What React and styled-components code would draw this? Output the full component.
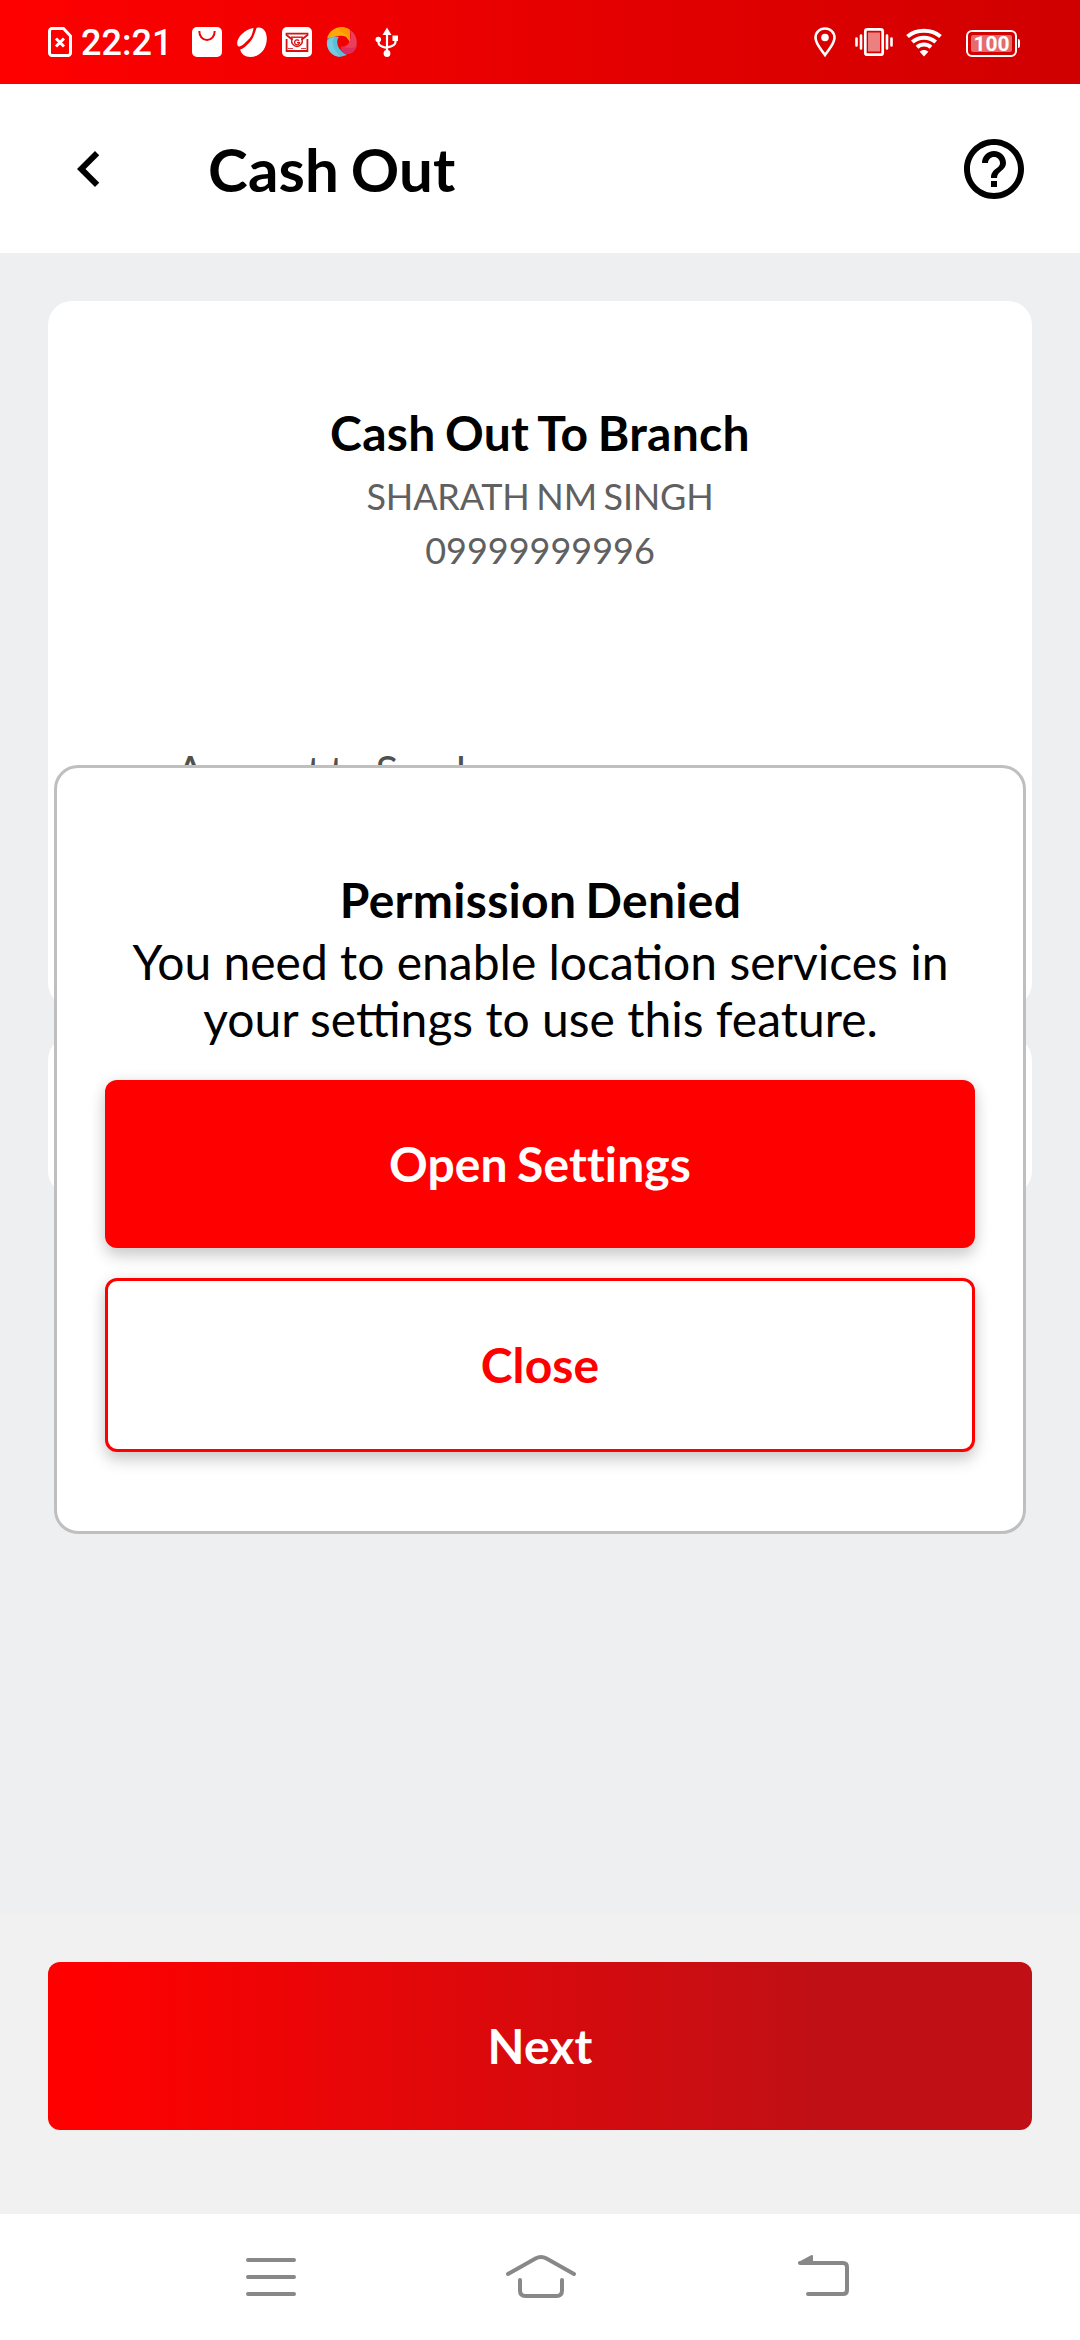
import React from "react";
import styled, { createGlobalStyle } from "styled-components";

const GlobalStyle = createGlobalStyle`
  *, *::before, *::after { box-sizing: border-box; }
  html, body { margin: 0; padding: 0; }
  body { font-family: Lato, "Open Sans", sans-serif; color: #000; background: #fff; }
`;

const Screen = styled.div`
  position: relative;
  width: 1080px;
  height: 2340px;
  display: flex;
  flex-direction: column;
  overflow: hidden;
  background: #eeeff1;
`;

const StatusBar = styled.header`
  height: 84px;
  flex: none;
  display: flex;
  align-items: flex-start;
  justify-content: space-between;
  padding: 27px 60px 0 48px;
  background: linear-gradient(90deg, #ff0000, #d00000);
`;

const StatusGroup = styled.div`
  display: flex;
  align-items: flex-start;
  height: 30px;
`;

const Clock = styled.span`
  width: 111px;
  margin-left: 9px;
  font-family: Roboto, sans-serif;
  font-weight: 500;
  font-size: 36px;
  line-height: 32px;
  color: #fff;
`;

const Glyph = styled.svg`
  display: block;
  flex: none;
  overflow: visible;
  width: ${(p) => p.$w}px;
  height: ${(p) => p.$h}px;
  margin-left: ${(p) => p.$ml || 0}px;
`;

const Battery = styled.div`
  position: relative;
  width: 51px;
  height: 27px;
  margin: 3px 3px 0 24px;
  padding: 3px;
  border: 2px solid #fff;
  border-radius: 6px;

  &::after {
    content: "";
    position: absolute;
    left: 50px;
    top: 7px;
    width: 2px;
    height: 9px;
    border-radius: 0 2px 2px 0;
    background: #fff;
  }
`;

const BatteryLevel = styled.div`
  height: 17px;
  border-radius: 2px;
  background: rgba(255, 255, 255, 0.42);
  color: #fff;
  font-family: Roboto, sans-serif;
  font-weight: 700;
  font-size: 21px;
  line-height: 18px;
  text-align: center;
`;

const AppBar = styled.div`
  height: 169px;
  flex: none;
  display: flex;
  align-items: center;
  padding: 0 50px 0 53px;
  background: #fff;
`;

const IconButton = styled.button`
  width: 72px;
  height: 72px;
  padding: 0;
  border: 0;
  background: none;
  color: #000;
`;

const PageTitle = styled.h1`
  flex: 1;
  margin: 0 0 0 83px;
  font-size: 60px;
  line-height: 72px;
  font-weight: 700;
  letter-spacing: 0.2px;
  word-spacing: -3.3px;
`;

const Content = styled.main`
  flex: 1;
  display: flex;
  flex-direction: column;
  gap: 29px;
  padding: 48px 48px 0;
`;

const Card = styled.section`
  height: ${(p) => p.$height}px;
  display: flex;
  flex-direction: column;
  align-items: center;
  border-radius: 24px;
  background: #fff;
`;

const CardTitle = styled.h2`
  margin: 103px 0 0;
  font-size: 48px;
  line-height: 58px;
  font-weight: 700;
  letter-spacing: 0.3px;
  word-spacing: -2.6px;
`;

const CardLine = styled.p`
  margin: ${(p) => p.$top}px 0 0;
  font-size: 36px;
  line-height: 43px;
  letter-spacing: ${(p) => (p.$tight ? "-0.2px" : "0")};
  word-spacing: ${(p) => (p.$tight ? "-2.3px" : "0")};
  color: #606060;
`;

const FieldLabel = styled.label`
  align-self: flex-start;
  margin: 174px 0 0 128px;
  font-size: 42px;
  line-height: 50px;
  letter-spacing: -0.5px;
  word-spacing: -2px;
  color: #505050;
`;

const Footer = styled.footer`
  height: 300px;
  flex: none;
  padding: 48px;
  background: #f1f1f1;
`;

const Button = styled.button`
  width: 100%;
  height: ${(p) => (p.$outlined ? 174 : 168)}px;
  display: flex;
  align-items: center;
  justify-content: center;
  padding: 0;
  border: ${(p) => (p.$outlined ? "3px solid #ff0000" : "0")};
  border-radius: 12px;
  background: ${(p) =>
    p.$gradient
      ? "linear-gradient(90deg, #ff0000 3%, #c01015 78%)"
      : p.$outlined
      ? "#fff"
      : "#ff0000"};
  box-shadow: ${(p) =>
    p.$raised ? "0 8px 16px rgba(0,0,0,0.18), 0 1px 16px rgba(0,0,0,0.07)" : "none"};
  color: ${(p) => (p.$outlined ? "#ff0000" : "#fff")};
  font-family: inherit;
  font-size: 48px;
  line-height: 58px;
  font-weight: 700;
  letter-spacing: 0.1px;
  word-spacing: -2.4px;
`;

const Overlay = styled.div`
  position: absolute;
  inset: 84px 0 125px;
  display: flex;
  align-items: center;
  justify-content: center;
`;

const Dialog = styled.div`
  width: 972px;
  height: 769px;
  padding: 103px 48px 0;
  border: 3px solid #bfbfbf;
  border-radius: 24px;
  background: #fff;
  text-align: center;
`;

const DialogTitle = styled.h2`
  margin: 0;
  padding-left: 1px;
  font-size: 48px;
  line-height: 58px;
  font-weight: 700;
  letter-spacing: 0.3px;
  word-spacing: -2.8px;
`;

const DialogText = styled.p`
  margin: 4px 0 33px;
  padding-left: 1px;
  font-size: 48px;
  line-height: 57px;
`;

const DialogActions = styled.div`
  display: flex;
  flex-direction: column;
  gap: 30px;
`;

const NavBar = styled.nav`
  height: 126px;
  flex: none;
  display: flex;
  align-items: flex-start;
  padding: 40px 0 0 246px;
  background: #fff;
`;

const SimIcon = () => (
  <Glyph $w={24} $h={30} viewBox="0 0 24 30" fill="none" stroke="#fff">
    <path d="M4 1.500H15.500L22.500 9V26a2.500 2.500 0 0 1-2.500 2.500H4A2.500 2.500 0 0 1 1.500 26V4A2.500 2.500 0 0 1 4 1.500z" strokeWidth="3" />
    <path d="M8 11.500l8 8M16 11.500l-8 8" strokeWidth="3" />
  </Glyph>
);

const BagIcon = () => (
  <Glyph $w={30} $h={30} viewBox="0 0 30 30">
    <rect width="30" height="30" rx="5" fill="#fff" />
    <path d="M7.300 4c0 5 3 9 7.700 9s7.700-4 7.700-9" fill="none" stroke="#f40000" strokeWidth="2" />
  </Glyph>
);

const BeanIcon = () => (
  <Glyph $w={30} $h={30} viewBox="0 0 30 30" $ml={15} fill="#fff">
    <path d="M16.500 1C8 2.500 0.500 9.500 0.200 16c-.2 2.200.8 3.800 2.300 3.500C6 18.500 8 16 10.500 13.500 14 10.500 15.500 7 16.500 1z" />
    <path d="M19.500 1C25 -1 30 4 29.800 12 29.500 22 23 30 13.500 30 8 30 4 27 3.200 22.500 7 21.500 9 19 11.500 16.500 16 12.500 17.500 7 19.500 1z" />
  </Glyph>
);

const MailIcon = () => (
  <Glyph $w={30} $h={30} viewBox="0 0 30 30" $ml={15}>
    <rect width="30" height="30" rx="5" fill="#fff" />
    <g fill="none" stroke="#d91010" strokeWidth="1.800">
      <path d="M4.600 12v12h20.800V12" />
      <path d="M10.500 12.800L4.500 8V6.700h21V8l-6 4.800" />
      <path d="M9 10.200h12" strokeWidth="1.400" />
      <path d="M10.500 11.500a5.200 5.200 0 1 0 9 0" strokeWidth="1.400" />
      <path d="M17 13.700a2.500 2.500 0 1 0 .6 2H15" strokeWidth="1.300" />
      <path d="M6 21.500h5M19 21.500h5" strokeWidth="0.800" />
    </g>
  </Glyph>
);

const SwirlIcon = () => (
  <Glyph $w={30} $h={30} viewBox="0 0 30 30" $ml={15}>
    <path d="M0 11.500C2 3.500 9-.5 16 0l7 3v12L19 9.800C13 7.500 8 10 0 11.500z" fill="#ffa80a" />
    <path d="M10 2C14.500-.8 20 0 23 3v12C22 9 17 6 10 2z" fill="#ff9800" />
    <path d="M23 3c6 3.500 8 11 6 18l-8 1-7-2c5 0 8-3 9-7 .8-3 .8-6 0-10z" fill="#ea3e5d" />
    <path d="M14 19c5 2.500 11 3 15.500.5-1 5-5.500 8.200-10 7.500-4-1-6-4-5.500-8z" fill="#de2b60" />
    <path d="M0 13c2-3 6-4.500 12-3-3 3-2 9 1.500 13 2 2.500 4 4 6.500 4.500C13 32 3 29 .5 20A14 14 0 0 1 0 13z" fill="#5bbfd8" />
    <path d="M7 10c-3 5 0 14 7 19.800C6 30 0 23.500 0 16c1-3 3-5 7-6z" fill="#73cbdf" />
  </Glyph>
);

const UsbIcon = () => (
  <Glyph $w={30} $h={30} viewBox="0 0 30 30" $ml={15}>
    <path d="M15 6v20M6.500 13v2.500c0 3 3 4.500 8.500 5.500M23.500 12v3c0 3-3 4.500-8.500 5.500" fill="none" stroke="#fff" strokeWidth="2.200" />
    <path d="M15 0.500l4.500 7.500h-9z" fill="#fff" />
    <circle cx="6.300" cy="12.500" r="2.800" fill="#fff" />
    <rect x="20.500" y="8.500" width="5.500" height="5.500" fill="#fff" />
    <circle cx="15" cy="26.500" r="3.400" fill="#fff" />
  </Glyph>
);

const PinIcon = () => (
  <Glyph $w={22} $h={30} viewBox="0 0 22 30">
    <path d="M11 1.500c-5.400 0-9.500 4-9.500 9.300C1.500 16.500 6 21 11 28c5-7 9.500-11.500 9.500-17.200C20.500 5.500 16.400 1.500 11 1.500z" fill="none" stroke="#fff" strokeWidth="2.600" />
    <circle cx="11" cy="10.500" r="3.800" fill="#fff" />
  </Glyph>
);

const VibrateIcon = () => (
  <Glyph $w={38} $h={30} viewBox="0 0 38 30" $ml={19}>
    <rect x="10.300" y="2.300" width="17.400" height="25.400" rx="2" fill="none" stroke="#fff" strokeWidth="2.700" />
    <rect x="13" y="5.500" width="12" height="19" fill="#fff" opacity="0.5" />
    <path d="M6 8.500v13M32 8.500v13M1.500 11.500v7M36.500 11.500v7" stroke="#fff" strokeWidth="2.600" strokeLinecap="round" />
  </Glyph>
);

const WifiIcon = () => (
  <Glyph $w={36} $h={30} viewBox="0 0 36 30" $ml={13} fill="none" stroke="#fff" strokeWidth="4">
    <path d="M1.500 9.500C10.500 1.700 25.500 1.700 34.500 9.500" />
    <path d="M6.300 15C13 9.200 23 9.200 29.700 15" />
    <path d="M11 20.300c4-3.600 10-3.600 14 0" />
    <path d="M18 29.500l-4.300-4.800c2.400-2.200 6.200-2.200 8.600 0z" fill="#fff" stroke="none" />
  </Glyph>
);

const BackIcon = () => (
  <Glyph $w={72} $h={72} viewBox="0 0 24 24" fill="currentColor">
    <path d="M15.410 7.410L14 6l-6 6 6 6 1.410-1.410L10.830 12z" />
  </Glyph>
);

const HelpIcon = () => (
  <Glyph $w={72} $h={72} viewBox="0 0 24 24" fill="currentColor">
    <path d="M11 18h2v-2h-2v2zm1-16C6.480 2 2 6.480 2 12s4.480 10 10 10 10-4.480 10-10S17.520 2 12 2zm0 18c-4.410 0-8-3.590-8-8s3.590-8 8-8 8 3.590 8 8-3.590 8-8 8zm0-14c-2.210 0-4 1.790-4 4h2c0-1.100.9-2 2-2s2 .9 2 2c0 2-3 1.750-3 5h2c0-2.250 3-2.500 3-5 0-2.210-1.790-4-4-4z" />
  </Glyph>
);

const navStroke = {
  fill: "none",
  stroke: "#888",
  strokeWidth: 4,
  strokeLinecap: "round",
  strokeLinejoin: "round",
};

const RecentsIcon = () => (
  <Glyph $w={50} $h={44} viewBox="0 0 50 44" {...navStroke}>
    <path d="M2 6h46M2 23h46M2 40h46" />
  </Glyph>
);

const HomeIcon = () => (
  <Glyph $w={70} $h={44} viewBox="0 0 70 44" $ml={210} {...navStroke}>
    <path d="M2 20L29.500 4.500Q35 1.500 40.500 4.500L68 20" />
    <path d="M14 26v10.500q0 5.500 5.500 5.500h31q5.500 0 5.500-5.500V26" />
  </Glyph>
);

const ReturnIcon = () => (
  <Glyph $w={51} $h={44} viewBox="0 0 51 44" $ml={222} {...navStroke}>
    <path d="M2 9H45Q49 9 49 13V36Q49 40 45 40H10" />
    <path d="M1 8.800L14 2V9z" fill="#888" strokeWidth="2" />
  </Glyph>
);

export default function App() {
  return (
    <>
      <GlobalStyle />
      <Screen>
        <StatusBar>
          <StatusGroup>
            <SimIcon />
            <Clock>22:21</Clock>
            <BagIcon />
            <BeanIcon />
            <MailIcon />
            <SwirlIcon />
            <UsbIcon />
          </StatusGroup>
          <StatusGroup>
            <PinIcon />
            <VibrateIcon />
            <WifiIcon />
            <Battery>
              <BatteryLevel>100</BatteryLevel>
            </Battery>
          </StatusGroup>
        </StatusBar>

        <AppBar>
          <IconButton aria-label="Back">
            <BackIcon />
          </IconButton>
          <PageTitle>Cash Out</PageTitle>
          <IconButton aria-label="Help">
            <HelpIcon />
          </IconButton>
        </AppBar>

        <Content>
          <Card $height={706}>
            <CardTitle>Cash Out To Branch</CardTitle>
            <CardLine $tight $top={13}>SHARATH NM SINGH</CardLine>
            <CardLine $top={11}>09999999996</CardLine>
            <FieldLabel>Amount to Send</FieldLabel>
          </Card>
          <Card $height={159} />
        </Content>

        <Footer>
          <Button $gradient>Next</Button>
        </Footer>

        <NavBar>
          <RecentsIcon />
          <HomeIcon />
          <ReturnIcon />
        </NavBar>

        <Overlay>
          <Dialog role="dialog">
            <DialogTitle>Permission Denied</DialogTitle>
            <DialogText>
              You need to enable location services in your settings to use this feature.
            </DialogText>
            <DialogActions>
              <Button $raised>Open Settings</Button>
              <Button $raised $outlined>
                Close
              </Button>
            </DialogActions>
          </Dialog>
        </Overlay>
      </Screen>
    </>
  );
}
